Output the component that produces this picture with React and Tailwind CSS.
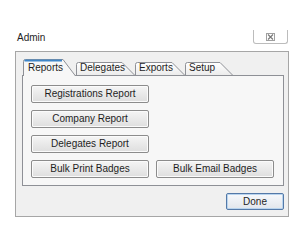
const font = { fontFamily: "'Liberation Sans', Arial, sans-serif" };

const tabs = [
  { label: "Reports", width: 53, active: true },
  { label: "Delegates", width: 59 },
  { label: "Exports", width: 50 },
  { label: "Setup", width: 48 },
];

const Tab = ({ label, width, active }) => {
  const h = active ? 17 : 13;
  const s = 13;
  const outline = `M0.5 ${h} L0.5 2.5 Q0.5 0.5 2.5 0.5 L${width - s} 0.5 L${width - 0.5} ${h}`;
  return (
    <div
      className={`relative shrink-0 ${active ? "z-10 -mb-[1px] pb-[2px] pl-[5px]" : "pb-[1px] pl-[4px]"}`}
      style={{ width, height: h }}
    >
      <svg className="absolute inset-0" width={width} height={h}>
        <defs>
          <linearGradient id="tabfill" x1="0" y1="0" x2="0" y2="1">
            <stop offset="0" stopColor="#ffffff" />
            <stop offset="1" stopColor="#ececec" />
          </linearGradient>
        </defs>
        <path d={`${outline} Z`} fill={active ? "#f7f7f7" : "url(#tabfill)"} stroke="none" />
        <path d={outline} fill="none" stroke="#8e9096" strokeWidth="1" />
        {active && (
          <path d={`M1.5 1.5 L${width - s - 1} 1.5`} stroke="#3f86c8" strokeWidth="2" />
        )}
      </svg>
      <span className="relative block h-full flex items-end text-[10px] leading-[12px] text-[#1e1e1e]">
        {label}
      </span>
    </div>
  );
};

const Btn = ({ children }) => (
  <button className="h-[18px] w-[118px] rounded-[2px] border border-[#8c8c8c] bg-gradient-to-b from-[#f5f5f5] to-[#dedede] text-[10px] leading-[12px] text-[#1e1e1e] shadow-[inset_0_0_0_1px_#fbfbfb]">
    {children}
  </button>
);

export default function App() {
  return (
    <div className="h-[250px] w-[300px] overflow-hidden bg-white pt-[30px]" style={font}>
      <div className="flex h-[14px] items-end justify-between pl-[17px] pr-[12px]">
        <span className="text-[10px] leading-[12px] text-[#1e1e1e]">Admin</span>
        <div className="flex h-[14px] w-[35px] items-center justify-center rounded-b-[3px] border border-t-0 border-[#bcbcbc]">
          <svg width="9" height="8" viewBox="0 0 9 8">
            <rect x="0.5" y="0.5" width="8" height="7" fill="none" stroke="#a0a0a0" />
            <path d="M2 1.5 L7 6.5 M7 1.5 L2 6.5" stroke="#7a7a7a" strokeWidth="1.2" />
          </svg>
        </div>
      </div>

      <div className="ml-[15px] mt-[7px] h-[166px] w-[274px] border border-[#a6a6a6] bg-[#f0f0f0] pl-[6px] pt-[7px]">
        <div className="flex h-[16px] items-end pl-[1px]">
          {tabs.map((t) => (
            <Tab key={t.label} {...t} />
          ))}
        </div>
        <div className="h-[111px] w-[262px] border border-[#8e9096] bg-[#f7f7f7] pl-[8px] pt-[9px]">
          <div className="flex flex-col gap-[7px]">
            <Btn>Registrations Report</Btn>
            <Btn>Company Report</Btn>
            <Btn>Delegates Report</Btn>
            <div className="flex gap-[7px]">
              <Btn>Bulk Print Badges</Btn>
              <Btn>Bulk Email Badges</Btn>
            </div>
          </div>
        </div>
        <div className="mt-[7px] flex w-[262px] justify-end">
          <button className="h-[17px] w-[58px] rounded-[2px] border border-[#5479a8] bg-gradient-to-b from-[#f7f9fc] to-[#e2e6ec] text-[10px] leading-[12px] text-[#1e1e1e] shadow-[inset_0_0_0_1px_#b9d4ee]">
            Done
          </button>
        </div>
      </div>
    </div>
  );
}
